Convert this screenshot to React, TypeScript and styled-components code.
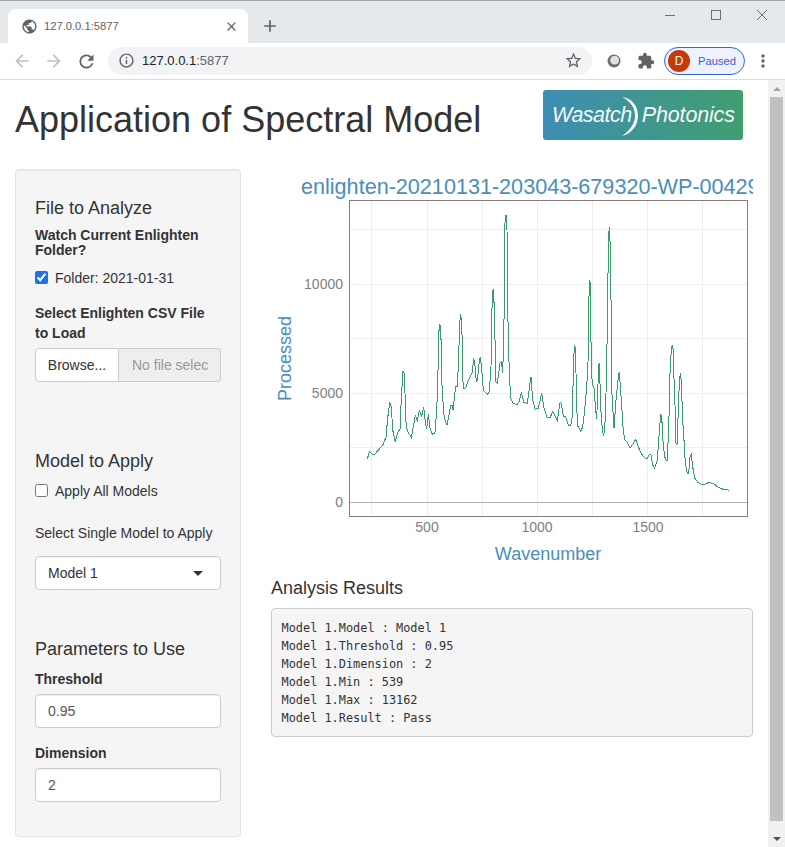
import React from 'react';
import styled, { createGlobalStyle } from 'styled-components';
import {
  MdAdd,
  MdArrowBack,
  MdArrowForward,
  MdClose,
  MdExtension,
  MdInfoOutline,
  MdMoreVert,
  MdPublic,
  MdRefresh,
  MdStarBorder,
} from 'react-icons/md';

const GlobalStyle = createGlobalStyle`
  html, body { margin: 0; padding: 0; background: #fff; }
  * { box-sizing: border-box; }
  body { font-family: "Liberation Sans", Arial, sans-serif; font-size: 14px; color: #333; }
`;

// ========================= browser chrome ====================================
const Window = styled.div`
  width: 785px;
  height: 847px;
  overflow: hidden;
  display: flex;
  flex-direction: column;
`;
const TabStrip = styled.div`
  height: 43px;
  flex: none;
  display: flex;
  align-items: flex-end;
  background: #e6e9ec;
  border-top: 1px solid #a3a6a9;
  padding-left: 8px;
`;
const Tab = styled.div`
  width: 240px;
  height: 34px;
  display: flex;
  align-items: center;
  padding: 0 9px 0 13px;
  background: #fff;
  border-radius: 8px 8px 0 0;
  font-size: 11.2px;
  color: #5f6368;
  svg { flex: none; }
`;
const TabTitle = styled.span`
  flex: 1;
  margin-left: 6px;
`;
const NewTab = styled.div`
  width: 20px;
  height: 34px;
  margin-left: 12px;
  display: flex;
  align-items: center;
  color: #5f6368;
`;
const WindowControls = styled.div`
  margin-left: auto;
  align-self: flex-start;
  display: flex;
  padding: 9px 18px 0 0;
  gap: 36px;
  color: #6b6e71;
`;
const Toolbar = styled.div`
  height: 37px;
  flex: none;
  display: flex;
  align-items: center;
  background: #fff;
  border-bottom: 1px solid #dadce0;
  padding: 0 0 1px 12px;
`;
const NavButton = styled.div<{ $off?: boolean }>`
  width: 20px;
  height: 20px;
  margin-right: 12px;
  color: ${(p) => (p.$off ? '#bdc1c6' : '#5f6368')};
  svg { display: block; }
`;
const AddressBar = styled.div`
  width: 484px;
  height: 28px;
  display: flex;
  align-items: center;
  background: #f1f3f4;
  border-radius: 14px;
  padding: 0 9px 0 10px;
  font-size: 13px;
  color: #202124;
`;
const Url = styled.span`
  flex: 1;
  margin-left: 7px;
  span { color: #5f6368; }
`;
const ExtensionSlot = styled.div`
  width: 20px;
  height: 20px;
  margin-left: 12px;
  display: flex;
  align-items: center;
  justify-content: center;
  color: #5f6368;
`;
const ProfilePill = styled.div`
  width: 81px;
  height: 28px;
  margin-left: 8px;
  display: flex;
  align-items: center;
  background: #edf2fc;
  border: 1px solid #3367d6;
  border-radius: 14px;
  padding-left: 3px;
  font-size: 11.2px;
  color: #3b5fc9;
`;
const Avatar = styled.div`
  width: 22px;
  height: 22px;
  margin-right: 8px;
  border-radius: 50%;
  background: #c5390a;
  color: #fff;
  font-size: 12px;
  display: flex;
  align-items: center;
  justify-content: center;
`;
const MenuSlot = styled.div`
  margin-left: 8px;
  display: flex;
  color: #5f6368;
`;

// ========================= page ====================================
const Viewport = styled.div`
  flex: 1;
  min-height: 0;
  display: flex;
`;
const Page = styled.div`
  width: 768px;
  flex: none;
`;
const Header = styled.header`
  height: 89px;
  display: flex;
  align-items: flex-start;
  padding: 0 25px 0 15px;
`;
const Title = styled.h1`
  margin: 20px 0 0;
  font-size: 36px;
  font-weight: 400;
  line-height: 1.1;
`;
const Logo = styled.div`
  position: relative;
  width: 200px;
  height: 50px;
  margin: 10px 0 0 auto;
  display: flex;
  align-items: center;
  padding: 0 0 0 9px;
  border-radius: 3px;
  background: linear-gradient(90deg, #3e8db4, #419e6e);
  color: #f4f8f8;
  font-size: 21.5px;
  font-style: italic;
  letter-spacing: -0.5px;
`;
const LogoWord = styled.span`
  margin-left: 10px;
  letter-spacing: -0.15px;
`;
const LogoArc = styled.svg`
  position: absolute;
  left: 75px;
  top: 6px;
`;
const Columns = styled.div`
  display: grid;
  grid-template-columns: 226px 482px;
  column-gap: 30px;
  padding: 0 15px;
  align-items: start;
`;

// ========================= sidebar ====================================
const Well = styled.aside`
  height: 668px;
  padding: 19px;
  background: #f5f5f5;
  border: 1px solid #e3e3e3;
  border-radius: 4px;
  box-shadow: inset 0 1px 1px rgba(0, 0, 0, 0.05);
`;
const SectionTitle = styled.h4<{ $top?: number; $bottom?: number }>`
  margin: ${(p) => p.$top ?? 10}px 0 ${(p) => p.$bottom ?? 10}px;
  font-size: 18px;
  font-weight: 400;
  line-height: 1.1;
`;
const Label = styled.div<{ $height?: number; $top?: number; $bold?: boolean }>`
  margin-top: ${(p) => p.$top ?? 0}px;
  font-weight: ${(p) => (p.$bold === false ? 400 : 700)};
  line-height: ${(p) => p.$height ?? 20}px;
`;
const CheckRow = styled.label<{ $top?: number }>`
  display: flex;
  align-items: center;
  height: 20px;
  margin-top: ${(p) => p.$top ?? 0}px;
  input {
    width: 13px;
    height: 13px;
    margin: 0 7px 0 0;
    accent-color: #1a73e8;
  }
`;
const FileGroup = styled.div`
  display: flex;
  height: 34px;
  margin-top: 5px;
`;
const BrowseButton = styled.div`
  width: 84px;
  display: flex;
  align-items: center;
  justify-content: center;
  background: #fff;
  border: 1px solid #ccc;
  border-radius: 4px 0 0 4px;
`;
const FileName = styled.div`
  width: 102px;
  padding-left: 13px;
  line-height: 32px;
  background: #eee;
  border: 1px solid #ccc;
  border-left: 0;
  border-radius: 0 4px 4px 0;
  color: #999;
  white-space: nowrap;
`;
const Control = styled.div<{ $top?: number; $muted?: boolean }>`
  position: relative;
  height: 34px;
  margin-top: ${(p) => p.$top ?? 5}px;
  padding: 0 12px;
  display: flex;
  align-items: center;
  background: #fff;
  border: 1px solid #ccc;
  border-radius: 4px;
  color: ${(p) => (p.$muted ? '#555' : '#333')};
  box-shadow: inset 0 1px 1px rgba(0, 0, 0, 0.075);
`;
const Caret = styled.span`
  position: absolute;
  right: 17px;
  top: 14px;
  border: 5px solid transparent;
  border-top-color: #333;
  border-bottom: 0;
`;

// ========================= results ====================================
const Results = styled.main`
  padding-top: 1px;
`;
const Chart = styled.svg`
  display: block;
  margin-bottom: 9px;
`;
const ResultText = styled.pre`
  height: 129px;
  margin: 0;
  padding: 10.5px 9.5px 9.5px;
  background: #f5f5f5;
  border: 1px solid #ccc;
  border-radius: 4px;
  font-family: "DejaVu Sans Mono", monospace;
  font-size: 11.9px;
  line-height: 18px;
  color: #333;
`;

// ========================= scrollbar ====================================
const Scrollbar = styled.div`
  width: 17px;
  flex: none;
  display: flex;
  flex-direction: column;
  align-items: center;
  background: #f1f1f1;
`;
const ScrollArrow = styled.div<{ $down?: boolean }>`
  height: 17px;
  flex: none;
  width: 100%;
  display: flex;
  align-items: center;
  justify-content: center;
  &::after {
    content: '';
    border-left: 4px solid transparent;
    border-right: 4px solid transparent;
    ${(p) => (p.$down ? 'border-top: 4px solid #505050;' : 'border-bottom: 4px solid #a3a3a3;')}
  }
`;
const ScrollThumb = styled.div`
  width: 13px;
  height: 724px;
  flex: none;
  margin-bottom: 9px;
  background: #c1c1c1;
`;

const GRID_X = [371.5, 427.5, 482.5, 537.5, 592.5, 647.5, 702.5];
const GRID_Y = [229.5, 284.5, 338.5, 393.5, 447.5];

// traced off the plot, in page coordinates
const SPECTRUM = `367.3,459.3 369.3,451.7 372.7,454.3 375,454 379.3,449 383.3,444.3 386,436.7 387.7,418 389.7,402.3 391.3,406.7 392.7,430
395.3,442.3 397.3,433.3 400,429 401.3,398.3 403,370.7 404.3,373.3 406,421.7 407.3,431 411.3,437.3 414,423.3 415.3,415 417.3,420.7 419.3,410.7
421.7,416 423.7,406.7 425.7,425 426.7,429.3 428.3,414.3 430,428.3 432,434.3 435,432.7 436.7,410 437.7,386.7 438.7,336.7 439.3,325 440.3,326
441.3,345 442,385 443.7,413.3 445.3,421.7 447,424.7 449.3,413.3 450.7,405.7 452,405 453,410 455,391.7 456,386 457.3,386.7 458.7,358.3 459.3,333.3
460.3,314 461.3,318.3 462.3,341.7 462.7,380 464,389.3 466,386.7 468.3,380 472,373.3 473.7,359.3 474.7,361.7 476.3,381.7 477.3,380.7 479.3,361.7
480.3,356.7 481.7,368.3 483.3,390 487.3,394.3 489.3,391.7 491,366.7 491.7,316.7 492.7,290 493.7,289.3 494.3,315 495.3,350 496,381.7 497.3,383.3
500,363.3 501.3,361.7 502.7,372.7 503.3,353.3 504.3,305 505,223.3 506,215 507,230 508,321.7 509.3,373.3 510.7,398.3 513.3,403.3 516.7,405
519.3,401.7 521.3,392.3 524,402.7 527.3,403.3 530,383.3 531,376.7 532.7,400 535,409.3 538.3,408.3 541.7,393.3 544,408 547.3,417.7 550,417.7
552.7,411.7 557.3,420.7 560,402.7 561.3,403.3 563.3,416 565.3,416 568.3,425 570.7,426 572.3,416.7 573.3,373.3 574.3,345 575.3,348.3 576,373.3
576.7,400 577.3,425 580.7,431.7 582.7,426.7 584.7,410 586.7,386.7 588,363.3 588.7,313.3 589.3,280 590.3,282.7 590.7,325 591.7,376.7 592.7,385
594,388.3 596,413.3 596.7,419.3 598.7,365 599.3,364.3 601.3,420 603.3,435 604.7,431.7 606,393.3 607.7,311.7 608.3,240 609.3,227.3 610.3,246.7
611.3,321.7 611.7,390 614,428.3 616,400 618.3,376.7 619.3,371.7 621.3,400 623.3,431.7 625,440 627.3,442 630,448.3 633.3,443.3 635.7,439.3
638.3,446.7 641,453.3 645,458.3 647.3,458.3 649.3,454.3 651,455 652.7,465 654.7,468.3 657.3,460 659.3,431.7 660.7,415 661.7,416.7 663.3,446.7
665.3,459.3 667,461 668.7,430 670,373.3 671.3,350 672.3,345 673.3,350.7 673.3,363.3 674.7,393.3 676,443.3 677,445 678.3,410 679.3,383.3
680.3,372.7 681.3,381.7 682.7,420 684.3,445 685.3,463.3 687.3,473.3 688.7,473.3 690,456.7 691.3,454.3 692.7,466.7 694.7,478.3 698.3,482.7
702.7,485 708.3,482.7 713.3,483.3 718.3,487.3 723.3,489.3 726.7,489 728.7,490.7`;

function SpectrumChart() {
  return (
    <Chart width="482" height="400" viewBox="271 170 482 400" fontFamily='"Liberation Sans", Arial, sans-serif'>
      <text x="301" y="194" fontSize="21.6" fill="#4a8eb9">enlighten-20210131-203043-679320-WP-00429</text>
      {GRID_X.map((x) => (
        <line key={x} x1={x} x2={x} y1="201" y2="516" stroke="#eee" shapeRendering="crispEdges" />
      ))}
      {GRID_Y.map((y) => (
        <line key={y} x1="350" x2="747" y1={y} y2={y} stroke="#eee" shapeRendering="crispEdges" />
      ))}
      <line x1="350" x2="747" y1="502.5" y2="502.5" stroke="#b5b5b5" shapeRendering="crispEdges" />
      <polyline points={SPECTRUM} fill="none" stroke="#3a9c6d" strokeWidth="1" shapeRendering="crispEdges" />
      <rect x="349.5" y="200.5" width="398" height="316" fill="none" stroke="#7f7f7f" shapeRendering="crispEdges" />
      <g fontSize="14" fill="#7f7f7f" textAnchor="end">
        <text x="343" y="289">10000</text>
        <text x="343" y="398">5000</text>
        <text x="343" y="507">0</text>
      </g>
      <g fontSize="14" fill="#7f7f7f" textAnchor="middle">
        <text x="427" y="532">500</text>
        <text x="537" y="532">1000</text>
        <text x="648" y="532">1500</text>
      </g>
      <text x="548" y="560" fontSize="18" fill="#4a8eb9" textAnchor="middle">Wavenumber</text>
      <text transform="translate(291 358.5) rotate(-90)" fontSize="18" fill="#4a8eb9" textAnchor="middle">Processed</text>
    </Chart>
  );
}

export default function App() {
  return (
    <Window>
      <GlobalStyle />
      <TabStrip>
        <Tab>
          <MdPublic size={17} />
          <TabTitle>127.0.0.1:5877</TabTitle>
          <MdClose size={15} />
        </Tab>
        <NewTab>
          <MdAdd size={20} />
        </NewTab>
        <WindowControls>
          <svg width="10" height="11" viewBox="0 0 10 11" stroke="currentColor" fill="none">
            <path d="M0 5.5h10" />
          </svg>
          <svg width="10" height="11" viewBox="0 0 10 11" stroke="currentColor" fill="none">
            <rect x="0.5" y="0.5" width="9" height="9" />
          </svg>
          <svg width="10" height="11" viewBox="0 0 10 11" stroke="currentColor" fill="none">
            <path d="M0 0l10 10M10 0L0 10" />
          </svg>
        </WindowControls>
      </TabStrip>
      <Toolbar>
        <NavButton $off><MdArrowBack size={20} /></NavButton>
        <NavButton $off><MdArrowForward size={20} /></NavButton>
        <NavButton><MdRefresh size={21} /></NavButton>
        <AddressBar>
          <MdInfoOutline size={17} color="#5f6368" />
          <Url>127.0.0.1<span>:5877</span></Url>
          <MdStarBorder size={19} color="#5f6368" />
        </AddressBar>
        <ExtensionSlot>
          <svg width="14" height="14" viewBox="0 0 14 14">
            <circle cx="7" cy="7" r="6.5" fill="#6a6d70" />
            <circle cx="7.6" cy="6.2" r="4.4" fill="#dfe1e3" />
          </svg>
        </ExtensionSlot>
        <ExtensionSlot>
          <MdExtension size={18} />
        </ExtensionSlot>
        <ProfilePill>
          <Avatar>D</Avatar>
          Paused
        </ProfilePill>
        <MenuSlot>
          <MdMoreVert size={20} />
        </MenuSlot>
      </Toolbar>
      <Viewport>
        <Page>
          <Header>
            <Title>Application of Spectral Model</Title>
            <Logo>
              <span>Wasatch</span>
              <LogoWord>Photonics</LogoWord>
              <LogoArc width="24" height="42" viewBox="0 0 24 42">
                <path d="M4 1C14 2 20 10 20 20C20 30 13 38 4 40C11 35 17 28 17 20C17 11 12 5 4 1Z" fill="#f4f8f8" />
              </LogoArc>
            </Logo>
          </Header>
          <Columns>
            <Well>
              <SectionTitle $bottom={9}>File to Analyze</SectionTitle>
              <Label $height={15}>Watch Current Enlighten Folder?</Label>
              <CheckRow $top={10}>
                <input type="checkbox" defaultChecked />
                Folder: 2021-01-31
              </CheckRow>
              <Label $top={15}>Select Enlighten CSV File to Load</Label>
              <FileGroup>
                <BrowseButton>Browse...</BrowseButton>
                <FileName>No file selec</FileName>
              </FileGroup>
              <SectionTitle $top={70} $bottom={9}>Model to Apply</SectionTitle>
              <CheckRow>
                <input type="checkbox" />
                Apply All Models
              </CheckRow>
              <Label $top={22} $bold={false}>Select Single Model to Apply</Label>
              <Control $top={13}>
                Model 1
                <Caret />
              </Control>
              <SectionTitle $top={50}>Parameters to Use</SectionTitle>
              <Label>Threshold</Label>
              <Control $muted>0.95</Control>
              <Label $top={15}>Dimension</Label>
              <Control $muted>2</Control>
            </Well>
            <Results>
              <SpectrumChart />
              <SectionTitle $top={0} $bottom={9}>Analysis Results</SectionTitle>
              <ResultText>{`Model 1.Model : Model 1
Model 1.Threshold : 0.95
Model 1.Dimension : 2
Model 1.Min : 539
Model 1.Max : 13162
Model 1.Result : Pass`}</ResultText>
            </Results>
          </Columns>
        </Page>
        <Scrollbar>
          <ScrollArrow />
          <ScrollThumb />
          <ScrollArrow $down />
        </Scrollbar>
      </Viewport>
    </Window>
  );
}
